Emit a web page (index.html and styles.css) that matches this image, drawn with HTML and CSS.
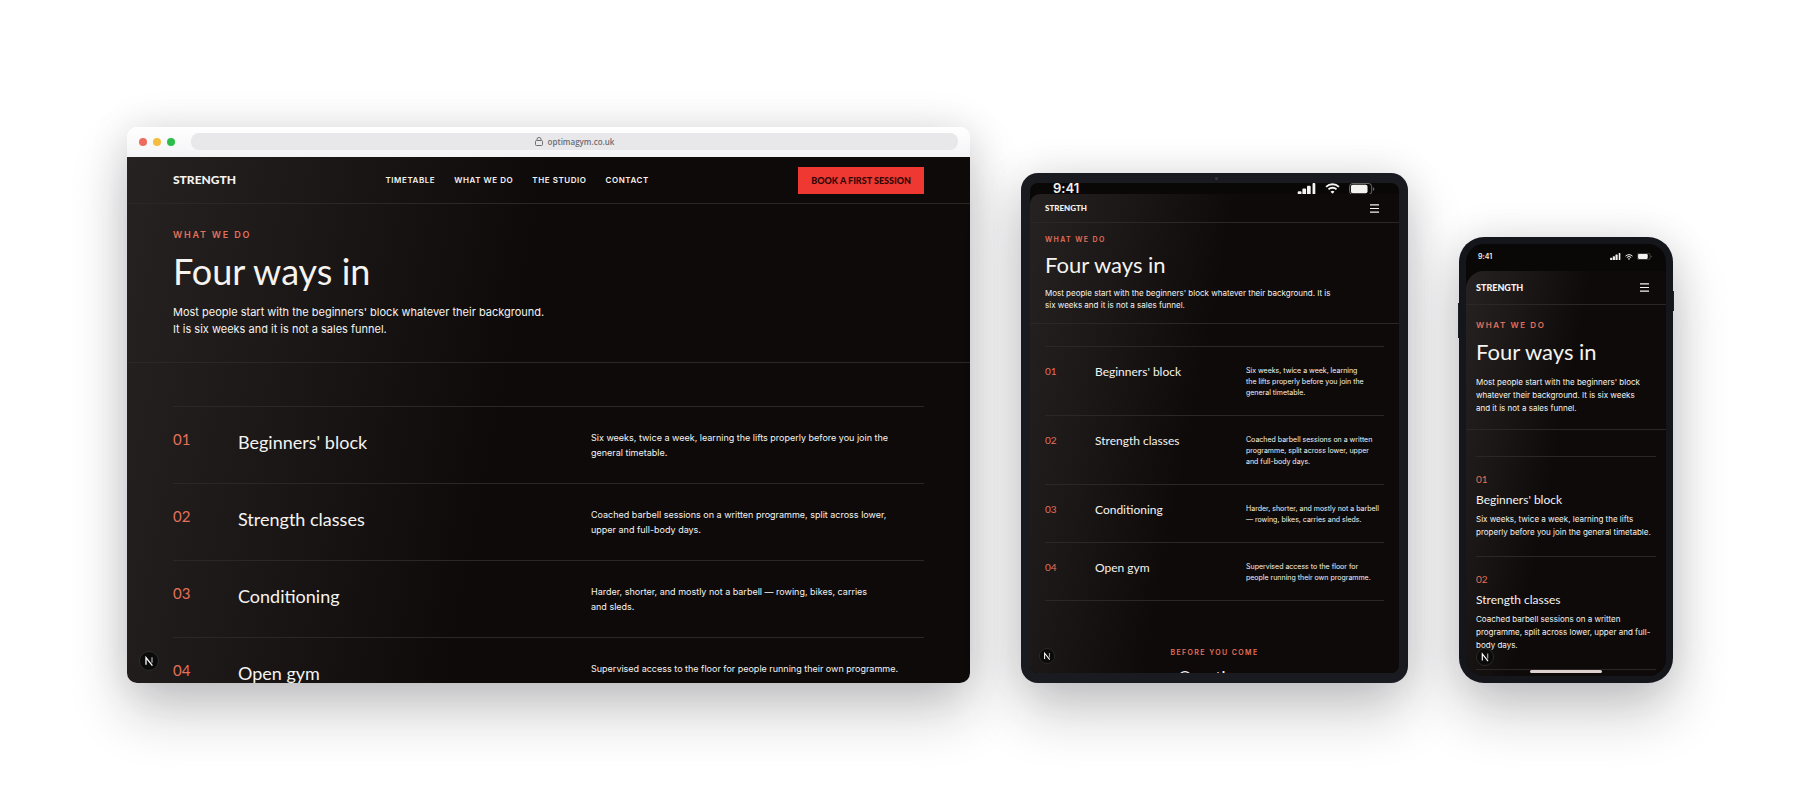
FILE: index.html
```
<!DOCTYPE html>
<html lang="en">

<head>
    <meta charset="utf-8">
    <meta name="viewport" content="width=device-width, initial-scale=1">
    <title>Strength - what we do</title>
    <link rel="stylesheet" href="styles.css">
</head>

<body>
    <!-- shared icons -->
    <svg class="sprite" aria-hidden="true">
        <symbol id="icon-signal" viewBox="0 0 20 13">
            <rect x="0" y="9" width="4" height="4" rx="1" />
            <rect x="5" y="6" width="4" height="7" rx="1" />
            <rect x="10" y="3" width="4" height="10" rx="1" />
            <rect x="16" y="0" width="3" height="13" rx="1" />
        </symbol>
        <symbol id="icon-wifi" viewBox="0 0 16 12">
            <path d="M1 4.2a10 10 0 0 1 14 0M3.6 7a6.300 6.300 0 0 1 8.800 0" fill="none" stroke="currentColor" stroke-width="2" />
            <path d="M8 11.800 5.800 9.500a3.200 3.200 0 0 1 4.400 0z" />
        </symbol>
        <symbol id="icon-battery" viewBox="0 0 28 13">
            <rect x=".5" y=".5" width="24" height="12" rx="3.500" fill="none" stroke="currentColor" stroke-opacity=".45" />
            <rect x="2" y="2" width="18" height="9" rx="2" />
            <path d="M26 4.500v4c1.800-.5 1.800-3.500 0-4z" fill-opacity=".45" />
        </symbol>
        <symbol id="icon-menu" viewBox="0 0 10 10">
            <path d="M0 1h10M0 5h10M0 9h10" fill="none" stroke="currentColor" stroke-width="1.200" />
        </symbol>
        <symbol id="icon-next" viewBox="0 0 20 20">
            <circle cx="10" cy="10" r="9.500" fill="#0b0b0b" stroke="#302d2b" />
            <path d="M7 13.800V6.600l6.400 8" fill="none" stroke="#fff" stroke-width="1.300" />
            <path d="M13 6.200v5.600" fill="none" stroke="#aaa" stroke-width="1.300" />
        </symbol>
    </svg>

    <main class="stage">
        <section class="browser" aria-label="Desktop">
            <div class="toolbar">
                <div class="lights"><i class="red"></i><i class="amber"></i><i class="green"></i></div>
                <div class="address">
                    <svg class="lock" viewBox="0 0 8 9"><rect x=".5" y="3.500" width="7" height="5" rx="1" /><path d="M2 3.500V2.300a2 1.800 0 0 1 4 0v1.200" /></svg>
                    <span>optimagym.co.uk</span>
                </div>
            </div>
            <div class="page desktop">
                <header class="site-header">
                    <a class="brand" href="#">STRENGTH</a>
                    <nav class="site-nav">
                        <a href="#">TIMETABLE</a>
                        <a href="#">WHAT WE DO</a>
                        <a href="#">THE STUDIO</a>
                        <a href="#">CONTACT</a>
                    </nav>
                    <a class="cta" href="#">BOOK A FIRST SESSION</a>
                </header>
                <div class="hero">
                    <p class="eyebrow">WHAT WE DO</p>
                    <h1>Four ways in</h1>
                    <p class="lead">Most people start with the beginners' block whatever their background. It is six weeks and it is not a sales funnel.</p>
                </div>
                <ol class="classes">
                    <li><span class="num">01</span><h2>Beginners' block</h2><p>Six weeks, twice a week, learning the lifts properly before you join the general timetable.</p></li>
                    <li><span class="num">02</span><h2>Strength classes</h2><p>Coached barbell sessions on a written programme, split across lower, upper and full-body days.</p></li>
                    <li><span class="num">03</span><h2>Conditioning</h2><p>Harder, shorter, and mostly not a barbell — rowing, bikes, carries and sleds.</p></li>
                    <li><span class="num">04</span><h2>Open gym</h2><p>Supervised access to the floor for people running their own programme.</p></li>
                </ol>
                <button class="dev-badge" aria-label="Dev tools"><svg><use href="#icon-next" /></svg></button>
            </div>
        </section>

        <section class="device tablet" aria-label="Tablet">
            <span class="camera"></span>
            <div class="screen">
                <div class="status">
                    <span class="time">9:41</span>
                    <svg class="signal"><use href="#icon-signal" /></svg>
                    <svg class="wifi"><use href="#icon-wifi" /></svg>
                    <svg class="battery"><use href="#icon-battery" /></svg>
                </div>
                <div class="page">
                    <header class="site-header">
                        <a class="brand" href="#">STRENGTH</a>
                        <button class="menu" aria-label="Menu"><svg><use href="#icon-menu" /></svg></button>
                    </header>
                    <div class="hero">
                        <p class="eyebrow">WHAT WE DO</p>
                        <h1>Four ways in</h1>
                        <p class="lead">Most people start with the beginners' block whatever their background. It is six weeks and it is not a sales funnel.</p>
                    </div>
                    <ol class="classes">
                        <li><span class="num">01</span><h2>Beginners' block</h2><p>Six weeks, twice a week, learning the lifts properly before you join the general timetable.</p></li>
                        <li><span class="num">02</span><h2>Strength classes</h2><p>Coached barbell sessions on a written programme, split across lower, upper and full-body days.</p></li>
                        <li><span class="num">03</span><h2>Conditioning</h2><p>Harder, shorter, and mostly not a barbell — rowing, bikes, carries and sleds.</p></li>
                        <li><span class="num">04</span><h2>Open gym</h2><p>Supervised access to the floor for people running their own programme.</p></li>
                    </ol>
                    <div class="questions">
                        <p class="eyebrow">BEFORE YOU COME</p>
                        <h2>Questions</h2>
                    </div>
                </div>
                <button class="dev-badge" aria-label="Dev tools"><svg><use href="#icon-next" /></svg></button>
            </div>
        </section>

        <section class="device phone" aria-label="Phone">
            <div class="screen">
                <div class="status">
                    <span class="time">9:41</span>
                    <svg class="signal"><use href="#icon-signal" /></svg>
                    <svg class="wifi"><use href="#icon-wifi" /></svg>
                    <svg class="battery"><use href="#icon-battery" /></svg>
                </div>
                <div class="page">
                    <header class="site-header">
                        <a class="brand" href="#">STRENGTH</a>
                        <button class="menu" aria-label="Menu"><svg><use href="#icon-menu" /></svg></button>
                    </header>
                    <div class="hero">
                        <p class="eyebrow">WHAT WE DO</p>
                        <h1>Four ways in</h1>
                        <p class="lead">Most people start with the beginners' block whatever their background. It is six weeks and it is not a sales funnel.</p>
                    </div>
                    <ol class="classes">
                        <li><span class="num">01</span><h2>Beginners' block</h2><p>Six weeks, twice a week, learning the lifts properly before you join the general timetable.</p></li>
                        <li><span class="num">02</span><h2>Strength classes</h2><p>Coached barbell sessions on a written programme, split across lower, upper and full-body days.</p></li>
                    </ol>
                </div>
                <button class="dev-badge" aria-label="Dev tools"><svg><use href="#icon-next" /></svg></button>
                <span class="home-bar"></span>
            </div>
        </section>
    </main>
</body>

</html>
```
FILE: styles.css
```
* {
    box-sizing: border-box;
    margin: 0;
    padding: 0;
}

body {
    background: #fff;
    color: #f5f3f0;
    font-family: Inter, sans-serif;
    font-variant-ligatures: none;
}

a {
    color: inherit;
    text-decoration: none;
}

button {
    border: 0;
    background: none;
    color: inherit;
}

svg {
    display: block;
    fill: currentColor;
}

.sprite {
    position: absolute;
    width: 0;
    height: 0;
}

.stage {
    display: grid;
    grid-template-columns: 843fr 387fr 214fr;
    align-items: end;
    gap: 51px;
    min-height: 100vh;
    padding: 127px 127px 128px;
    overflow: hidden;
}

.browser,
.device {
    min-width: 0;
    min-height: 0;
    box-shadow: 0 28px 56px rgba(20, 22, 30, 0.24), 0 0 40px rgba(20, 22, 30, 0.1);
}

/* browser window */
.browser {
    aspect-ratio: 843 / 556;
    display: flex;
    flex-direction: column;
    border-radius: 10px;
    overflow: hidden;
}

.toolbar {
    display: flex;
    align-items: center;
    flex: none;
    gap: 15px;
    height: 30px;
    padding: 0 12px 1px;
    background: linear-gradient(#fff, #f4f4f6);
}

.lights {
    display: flex;
    gap: 6px;
    width: 37px;
}

.lights i {
    width: 8px;
    height: 8px;
    border-radius: 50%;
}

.red { background: #ed6a5e; }
.amber { background: #f5bd3e; }
.green { background: #2dbd4b; }

.address {
    flex: 1;
    display: flex;
    align-items: center;
    justify-content: center;
    gap: 5px;
    height: 17px;
    border-radius: 8px;
    background: #e8e8eb;
    color: #6c6c71;
    font: 600 8px/17px "Open Sans", sans-serif;
}

.lock {
    width: 8px;
    height: 9px;
    fill: none;
    stroke: currentColor;
}

/* the site itself */
.page {
    flex: 1;
    min-height: 0;
    background: linear-gradient(101deg, #252221 0%, #1a1716 22%, #0d0a09 45%);
}

.desktop {
    position: relative;
    overflow: hidden;
}

.site-header {
    display: flex;
    align-items: center;
    justify-content: space-between;
    height: 47px;
    padding: 0 46px;
    border-bottom: 1px solid #2a2726;
}

.brand {
    font: 900 12px/14px Lato, sans-serif;
}

.site-nav {
    display: flex;
    gap: 19px;
    font-size: 8px;
    font-weight: 600;
    letter-spacing: 0.07em;
}

.cta {
    padding: 6px 13px;
    background: #ee3831;
    color: #2b0706;
    font: 900 9px/15px Lato, sans-serif;
}

.hero {
    padding: 24px 46px;
    border-bottom: 1px solid #2a2726;
}

.eyebrow {
    color: #e4705b;
    font-size: 9px;
    font-weight: 600;
    line-height: 14px;
    letter-spacing: 0.2em;
}

h1 {
    margin: 7px 0 11px;
    font: 400 36px/44px Lato, sans-serif;
}

.lead {
    max-width: 372px;
    font-size: 11px;
    line-height: 17px;
}

.classes {
    margin: 43px 46px 0;
    border-top: 1px solid #2a2726;
    list-style: none;
}

.classes li {
    display: grid;
    grid-template-columns: 65px 353fr 333fr;
    padding: 23px 0;
    border-bottom: 1px solid #2a2726;
}

.num {
    color: #e4705b;
    font: 400 15px/18px Lato, sans-serif;
}

.classes h2 {
    font: 400 18px/24px Lato, sans-serif;
}

.classes p {
    max-width: 315px;
    font-size: 9px;
    line-height: 15px;
    text-wrap: pretty;
}

.dev-badge {
    position: absolute;
    left: 12px;
    bottom: 12px;
    width: 20px;
    height: 20px;
}

.dev-badge svg {
    width: 100%;
    height: 100%;
}

/* handheld frames */
.device {
    position: relative;
    background: #191b20;
}

.screen {
    position: relative;
    display: flex;
    flex-direction: column;
    height: 100%;
    background: #0a0807;
    overflow: hidden;
}

.status {
    display: flex;
    align-items: center;
    flex: none;
}

.time {
    margin-right: auto;
    font-weight: 600;
}

.menu svg {
    width: 9px;
    height: 9px;
}

/* tablet */
.tablet {
    aspect-ratio: 387 / 510;
    padding: 10px 9px;
    border-radius: 17px;
}

.tablet .screen {
    border-radius: 8px;
}

.camera {
    position: absolute;
    top: 4px;
    left: 50%;
    width: 3px;
    height: 3px;
    border-radius: 50%;
    background: #34373d;
}

.tablet .status {
    height: 11px;
    padding: 0 23px;
    gap: 8px;
}

.tablet .time {
    font-size: 13px;
    line-height: 11px;
}

.tablet .signal { width: 20px; height: 12px; }
.tablet .wifi { width: 15px; height: 11px; }
.tablet .battery { width: 28px; height: 12px; }

.tablet .page {
    border-top-left-radius: 10px;
}

.tablet .site-header {
    height: 29px;
    padding: 0 20px 0 15px;
}

.tablet .brand {
    font-size: 8px;
}

.tablet .hero {
    padding: 12px 15px;
}

.tablet .eyebrow {
    font-size: 7px;
    line-height: 10px;
}

.tablet h1 {
    margin: 6px 0 8px;
    font-size: 22px;
    line-height: 28px;
}

.tablet .lead {
    max-width: 295px;
    font-size: 8px;
    line-height: 12px;
}

.tablet .classes {
    margin: 22px 15px 0;
}

.tablet .classes li {
    grid-template-columns: 50px 151fr 138fr;
    padding: 18px 0 17px;
}

.tablet .num {
    font-size: 10px;
    line-height: 12px;
}

.tablet .classes h2 {
    font-size: 12px;
    line-height: 14px;
}

.tablet .classes p {
    max-width: 135px;
    font-size: 7px;
    line-height: 11px;
}

.questions {
    padding-top: 47px;
    text-align: center;
}

.questions h2 {
    margin-top: 8px;
    font: 400 16px/20px Lato, sans-serif;
}

.tablet .dev-badge {
    left: 9px;
    bottom: 9px;
    width: 16px;
    height: 16px;
}

/* phone */
.phone {
    aspect-ratio: 214 / 446;
    padding: 7px;
    border-radius: 25px;
    background: #14161c;
}

.phone::before,
.phone::after {
    content: "";
    position: absolute;
    z-index: -1;
    width: 2px;
    background: #20232a;
}

.phone::before {
    top: 66px;
    left: -1px;
    height: 35px;
}

.phone::after {
    top: 54px;
    right: -1px;
    height: 20px;
}

.phone .screen {
    border-radius: 18px;
}

.phone .status {
    height: 27px;
    padding: 0 14px 2px 12px;
    gap: 4px;
}

.phone .time {
    font-size: 7px;
}

.phone .signal { width: 11px; height: 7px; }
.phone .wifi { width: 8px; height: 6px; }
.phone .battery { width: 15px; height: 7px; }

.phone .page {
    border-top-left-radius: 18px;
}

.phone .site-header {
    height: 34px;
    padding: 0 17px 0 10px;
}

.phone .brand {
    font-size: 9px;
}

.phone .hero {
    padding: 15px 10px 14px;
}

.phone .eyebrow {
    font-size: 8px;
    line-height: 10px;
}

.phone h1 {
    margin: 8px 0 10px;
    font-size: 22px;
    line-height: 28px;
}

.phone .lead {
    max-width: 170px;
    font-size: 8px;
    line-height: 13px;
}

.phone .classes {
    margin: 26px 10px 0;
}

.phone .classes li {
    display: block;
    padding: 15px 0 17px;
}

.phone .num {
    display: block;
    font-size: 10px;
    line-height: 14px;
}

.phone .classes h2 {
    margin: 4px 0 3px;
    font-size: 12px;
    line-height: 20px;
}

.phone .classes p {
    font-size: 8px;
    line-height: 13px;
    text-wrap: wrap;
}

.phone .dev-badge {
    left: 10px;
    bottom: 10px;
    width: 18px;
    height: 18px;
}

.home-bar {
    position: absolute;
    left: 50%;
    bottom: 3px;
    width: 72px;
    height: 3px;
    margin-left: -36px;
    border-radius: 2px;
    background: #ddd0cd;
}
```
